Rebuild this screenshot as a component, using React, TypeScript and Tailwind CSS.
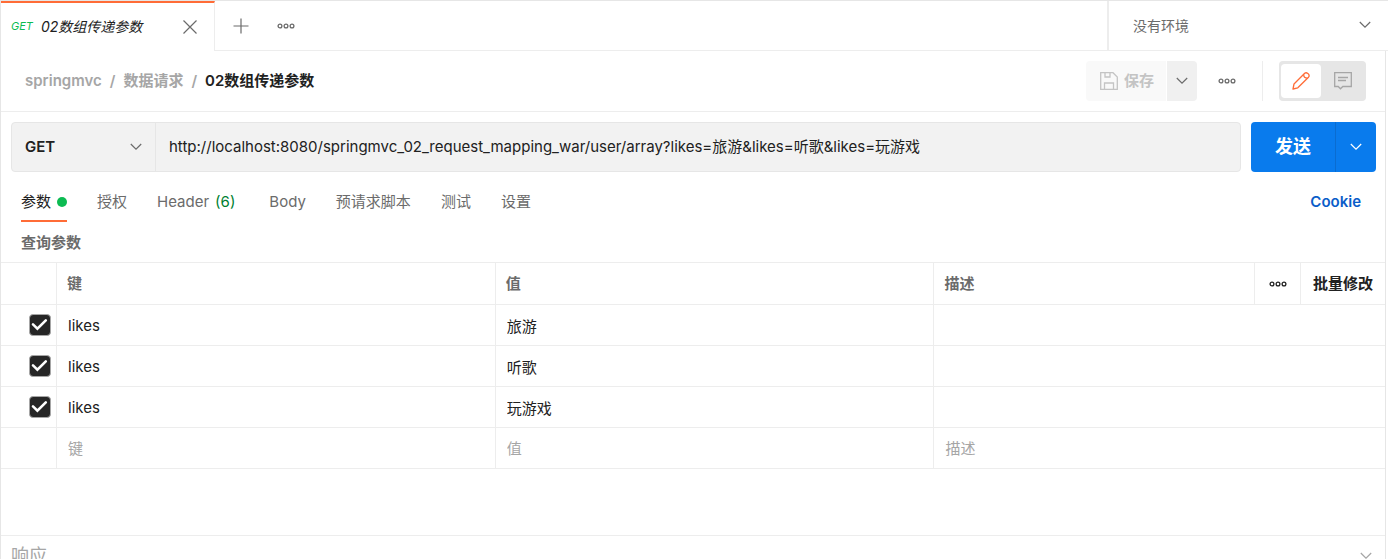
import { useState } from 'react';
import type { ReactNode } from 'react';

const REQUEST_URL =
  'http://localhost:8080/springmvc_02_request_mapping_war/user/array?likes=旅游&likes=听歌&likes=玩游戏';

const initialParams = [
  { key: 'likes', value: '旅游', description: '', enabled: true },
  { key: 'likes', value: '听歌', description: '', enabled: true },
  { key: 'likes', value: '玩游戏', description: '', enabled: true },
];

const tabs = [
  { label: '参数', dot: true },
  { label: '授权' },
  { label: 'Header', count: 6 },
  { label: 'Body' },
  { label: '预请求脚本' },
  { label: '测试' },
  { label: '设置' },
];

/* Icons */

function Chevron({ className = '' }: { className?: string }) {
  return (
    <svg viewBox="0 0 12 8" className={`w-3 h-2 shrink-0 ${className}`} fill="none" stroke="currentColor" strokeWidth="1.2" aria-hidden="true">
      <path d="M0.8 1L6 6.2L11.2 1" />
    </svg>
  );
}

function Dots() {
  return (
    <svg viewBox="0 0 18 6" className="w-[18px] h-1.5" fill="none" stroke="currentColor" strokeWidth="1.3" aria-hidden="true">
      <circle cx="3" cy="3" r="1.9" />
      <circle cx="9" cy="3" r="1.9" />
      <circle cx="15" cy="3" r="1.9" />
    </svg>
  );
}

function SaveIcon() {
  return (
    <svg viewBox="0 0 18 18" className="w-[18px] h-[18px]" fill="none" stroke="currentColor" strokeWidth="1.3" aria-hidden="true">
      <path d="M0.7 0.7H13L17.3 5V17.3H0.7Z" />
      <path d="M5 0.7V5H10V0.7" />
      <path d="M4.5 17.3V11H13.5V17.3" />
    </svg>
  );
}

function PencilIcon() {
  return (
    <svg viewBox="0 0 18 18" className="w-[18px] h-[18px]" fill="none" stroke="currentColor" strokeWidth="1.3" strokeLinejoin="round" aria-hidden="true">
      <path d="M1 17L2 12L12.7 1.3Q14.2 0 15.9 1.6Q18 3.4 16.5 5.2L5.8 15.8Z" />
      <path d="M11.7 2.4Q11.6 6.2 15.6 6.1" />
    </svg>
  );
}

function CommentIcon() {
  return (
    <svg viewBox="0 0 18 18" className="w-[18px] h-[18px]" fill="none" stroke="currentColor" strokeWidth="1.3" aria-hidden="true">
      <path d="M0.7 0.7H17.3V14.5H8.8L6.5 16.8L4.2 14.5H0.7Z" />
      <path d="M4 5.5H14M4 8.5H12" />
    </svg>
  );
}

/* Table pieces */

function Cell({ children, className = '' }: { children?: ReactNode; className?: string }) {
  return <td className={`h-[41px] border-b border-[#ededed] p-0 ${className}`}>{children}</td>;
}

function CellInput({ label, value, placeholder }: { label: string; value?: string; placeholder?: string }) {
  return (
    <input
      type="text"
      aria-label={label}
      defaultValue={value}
      placeholder={placeholder}
      className="block w-full h-10 px-[11px] bg-transparent text-[#212121] placeholder:text-[#a6a6a6] outline-none"
    />
  );
}

function TabBar() {
  return (
    <div className="flex shrink-0 h-[51px] border-t border-[#e6e6e6]">
      <div className="flex items-center w-[214px] border-t-2 border-t-[#ff6c37] border-r border-r-[#ededed] pl-2.5 pr-4 text-sm">
        <span className="text-[11px] italic text-[#0cbb52]">GET</span>
        <span className="ml-2 italic text-[#212121] whitespace-nowrap">02数组传递参数</span>
        <button aria-label="Close tab" className="ml-auto text-[#6b6b6b]">
          <svg viewBox="0 0 16 16" className="w-4 h-4" fill="none" stroke="currentColor" strokeWidth="1.2" aria-hidden="true">
            <path d="M1.5 1.5L14.5 14.5M14.5 1.5L1.5 14.5" />
          </svg>
        </button>
      </div>
      <div className="flex flex-1 items-center gap-7 border-b border-[#ededed] pl-[18px] text-[#6b6b6b]">
        <button aria-label="New tab">
          <svg viewBox="0 0 16 16" className="w-4 h-4" fill="none" stroke="currentColor" strokeWidth="1.2" aria-hidden="true">
            <path d="M8 0.5V15.5M0.5 8H15.5" />
          </svg>
        </button>
        <button aria-label="Tab options">
          <Dots />
        </button>
      </div>
      <div className="relative w-[281px] border-l-2 border-b border-[#ededed] text-[#6b6b6b]">
        <select aria-label="Environment" className="w-full h-full pl-6 pr-10 appearance-none bg-transparent text-sm outline-none">
          <option>没有环境</option>
        </select>
        <Chevron className="absolute right-[17px] top-5 pointer-events-none" />
      </div>
    </div>
  );
}

function RequestHeader() {
  return (
    <header className="flex h-[61px] items-center border-b border-[#ededed] pl-6 pr-[19px]">
      <nav className="flex items-center gap-2 font-semibold text-[#a6a6a6] whitespace-nowrap">
        <a href="#">springmvc</a>
        <span>/</span>
        <a href="#">数据请求</a>
        <span>/</span>
        <h1 className="text-[#212121]">02数组传递参数</h1>
      </nav>

      <div className="ml-auto flex h-10 items-center">
        <div className="flex h-10 gap-px">
          <button disabled className="flex items-center gap-1.5 w-20 pl-3.5 rounded-l bg-[#f9f9f9] font-semibold text-[#c4c4c4] whitespace-nowrap">
            <SaveIcon />
            保存
          </button>
          <button aria-label="Save options" className="flex items-center justify-center w-[30px] rounded-r bg-[#f0f0f0] text-[#6b6b6b]">
            <Chevron />
          </button>
        </div>
        <button aria-label="More actions" className="ml-[21px] text-[#6b6b6b]">
          <Dots />
        </button>
        <div className="ml-[26px] mr-4 w-px h-10 bg-[#ededed]" />
        <div className="flex h-10 w-[87px] rounded bg-[#e6e6e6] p-0.5">
          <button aria-label="Build" className="flex items-center justify-center w-10 my-px rounded bg-white text-[#ff6c37]">
            <PencilIcon />
          </button>
          <button aria-label="Comments" className="flex flex-1 items-center justify-center text-[#a6a6a6]">
            <CommentIcon />
          </button>
        </div>
      </div>
    </header>
  );
}

function UrlBar() {
  return (
    <form className="flex gap-2.5 pl-2.5 pr-[9px] pt-2.5" onSubmit={(e) => e.preventDefault()}>
      <div className="flex flex-1 h-[50px] rounded border border-[#e6e6e6] bg-[#f2f2f2]">
        <div className="relative w-36 border-r border-[#e6e6e6]">
          <select aria-label="Method" className="w-full h-full pl-[13px] pr-8 appearance-none bg-transparent font-semibold text-[#212121] outline-none">
            <option>GET</option>
            <option>POST</option>
            <option>PUT</option>
            <option>DELETE</option>
          </select>
          <Chevron className="absolute right-[13px] top-5 pointer-events-none text-[#6b6b6b]" />
        </div>
        <input
          type="text"
          aria-label="Request URL"
          defaultValue={REQUEST_URL}
          className="flex-1 min-w-0 px-[13px] bg-transparent text-[#212121] outline-none"
        />
      </div>
      <div className="flex h-[50px] rounded overflow-hidden bg-[#097bed] text-white">
        <button type="submit" className="w-[84px] text-lg font-bold">发送</button>
        <button type="button" aria-label="Send options" className="flex items-center justify-center w-[41px] border-l border-[#0a6cd0]">
          <Chevron />
        </button>
      </div>
    </form>
  );
}

function ParamsTable() {
  const [params, setParams] = useState(initialParams);

  const toggle = (index: number) =>
    setParams(params.map((p, i) => (i === index ? { ...p, enabled: !p.enabled } : p)));

  return (
    <table className="w-full table-fixed border-separate border-spacing-0 border-t border-[#ededed]">
      <colgroup>
        <col className="w-14" />
        <col className="w-[31.7%]" />
        <col className="w-[31.7%]" />
        <col />
        <col className="w-[46px]" />
        <col className="w-[84px]" />
      </colgroup>
      <thead>
        <tr className="text-left text-[#6b6b6b] [&>*]:h-[42px] [&>*]:border-b [&>*]:border-[#ededed] [&>*]:font-semibold">
          <td className="border-r" />
          <th className="border-r px-2.5 py-0">键</th>
          <th className="border-r px-2.5 py-0">值</th>
          <th className="border-r px-2.5 py-0">描述</th>
          <th className="border-r p-0">
            <button aria-label="Columns" className="flex w-full justify-center text-[#212121]">
              <Dots />
            </button>
          </th>
          <th className="p-0">
            <button className="w-full font-semibold text-[#212121] whitespace-nowrap">批量修改</button>
          </th>
        </tr>
      </thead>
      <tbody>
        {params.map((param, index) => (
          <tr key={index}>
            <Cell className="border-r">
              <label className="grid w-[22px] h-[22px] ml-7">
                <input
                  type="checkbox"
                  aria-label={`${param.key} ${param.value}`}
                  checked={param.enabled}
                  onChange={() => toggle(index)}
                  className="peer col-start-1 row-start-1 w-[22px] h-[22px] appearance-none rounded border border-[#a6a6a6] bg-white checked:bg-[#262626]"
                />
                <svg viewBox="0 0 22 22" className="hidden peer-checked:block col-start-1 row-start-1 w-[22px] h-[22px] pointer-events-none" fill="none" stroke="white" strokeWidth="2.6" aria-hidden="true">
                  <path d="M4 10.4L8.4 14.6L16.8 6.4" strokeLinecap="round" />
                </svg>
              </label>
            </Cell>
            <Cell className="border-r">
              <CellInput label="键" value={param.key} />
            </Cell>
            <Cell className="border-r">
              <CellInput label="值" value={param.value} />
            </Cell>
            <td colSpan={3} className="h-[41px] border-b border-[#ededed] p-0">
              <CellInput label="描述" value={param.description} />
            </td>
          </tr>
        ))}
        <tr>
          <Cell className="border-r" />
          <Cell className="border-r">
            <CellInput label="键" placeholder="键" />
          </Cell>
          <Cell className="border-r">
            <CellInput label="值" placeholder="值" />
          </Cell>
          <td colSpan={3} className="h-[41px] border-b border-[#ededed] p-0">
            <CellInput label="描述" placeholder="描述" />
          </td>
        </tr>
      </tbody>
    </table>
  );
}

export default function App() {
  const [active, setActive] = useState('参数');

  return (
    <div className="h-screen flex flex-col overflow-hidden border-l border-[#e6e6e6] bg-white font-['Inter','Noto_Sans_CJK_SC',sans-serif] text-[15px] leading-5 text-[#212121]">
      <TabBar />

      <main className="flex-1 mr-0.5 border-r border-[#e6e6e6]">
        <RequestHeader />
        <UrlBar />

        <div className="flex items-start justify-between pl-5 pr-6 pt-5">
          <div role="tablist" className="flex gap-[30px]">
            {tabs.map(({ label, dot, count }) => (
              <button
                key={label}
                role="tab"
                aria-selected={active === label}
                onClick={() => setActive(label)}
                className={`flex items-center h-[30px] pb-2 border-b-2 whitespace-nowrap ${
                  active === label ? 'border-[#ff6c37] text-[#212121]' : 'border-transparent text-[#6b6b6b]'
                }`}
              >
                {label}
                {dot && <span className="ml-1.5 w-2.5 h-2.5 rounded-full bg-[#0cbb52]" />}
                {count && <span className="ml-1.5 mr-1 text-[#007f31]">({count})</span>}
              </button>
            ))}
          </div>
          <a href="#" className="font-semibold text-[#0a5dc9]">Cookie</a>
        </div>

        <h2 className="pl-5 pt-[11px] pb-[9px] font-semibold text-[#6b6b6b]">查询参数</h2>
        <ParamsTable />

        <section className="flex items-center justify-between mt-[66px] border-t border-[#ededed] pl-2.5 pr-[13px] py-2 text-[#a6a6a6]">
          <h2 className="text-lg leading-6">响应</h2>
          <button aria-label="Expand response">
            <Chevron />
          </button>
        </section>
      </main>
    </div>
  );
}
